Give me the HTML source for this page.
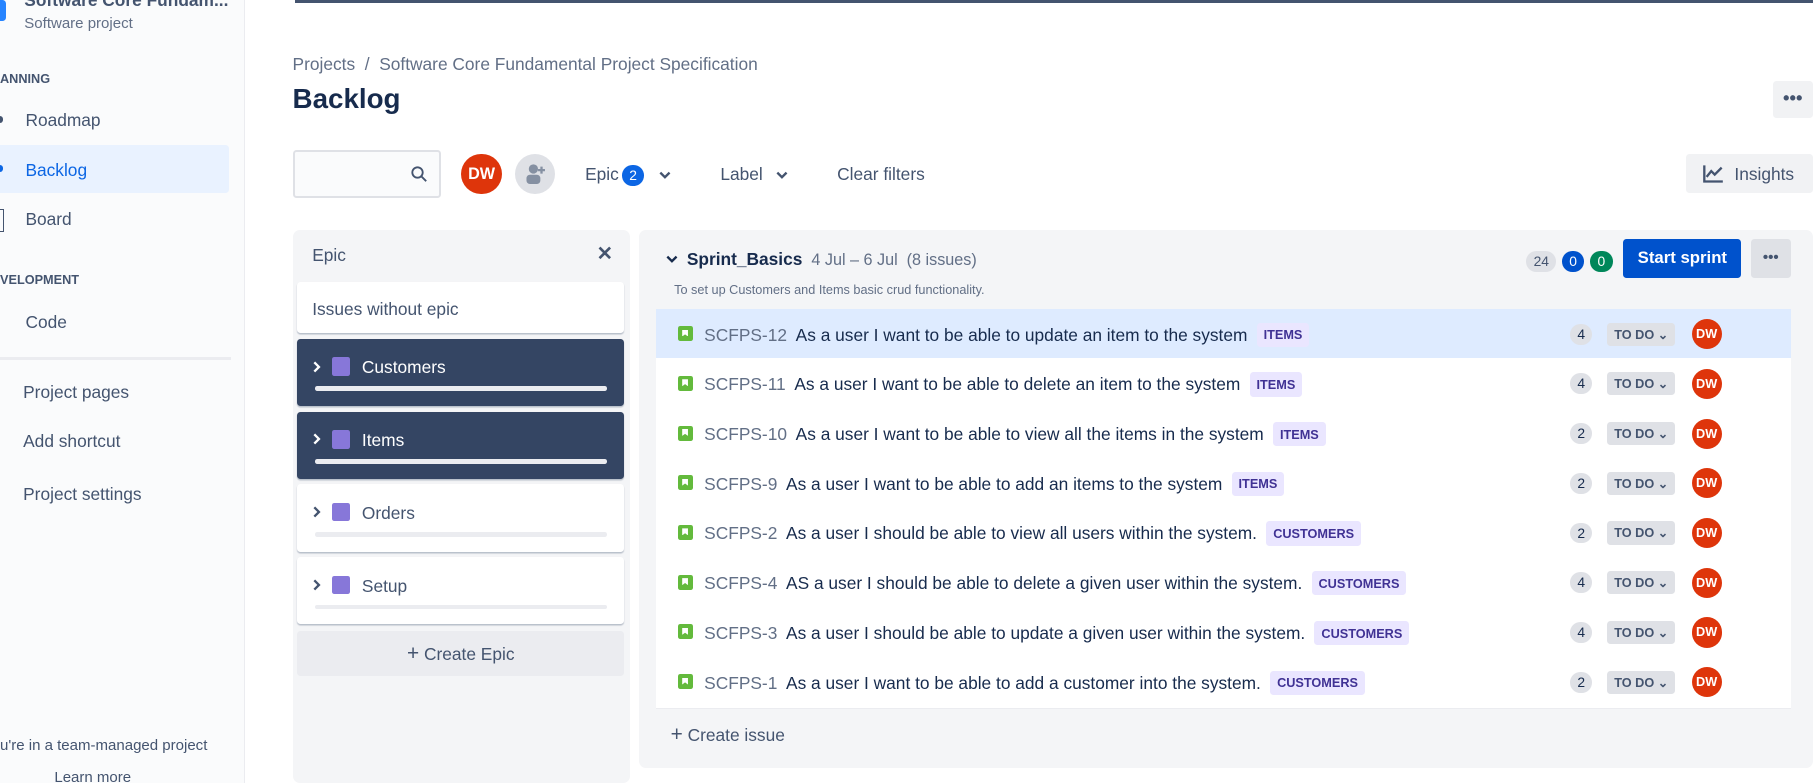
<!DOCTYPE html>
<html><head><meta charset="utf-8"><style>
html,body{margin:0;padding:0;width:1813px;height:783px;overflow:hidden;background:#fff;}
#w{zoom:1.15625;width:1568px;height:677px;position:relative;font-family:"Liberation Sans",sans-serif;color:#172b4d;}
.a{position:absolute;white-space:nowrap;}
.sb{left:0;top:0;width:211px;height:677px;background:#fafbfc;border-right:1px solid #ebecf0;}
.nav{font-size:15px;color:#44546f;}
.hd{font-size:11px;font-weight:bold;color:#44546f;}
.av{border-radius:50%;background:#de350b;color:#fff;font-weight:bold;text-align:center;}
.card{left:257px;width:283px;height:58px;border-radius:3px;background:#fff;box-shadow:0 1px 1px rgba(9,30,66,.25);}
.card.dk{background:#344563;color:#fff;}
.card .t{position:absolute;left:56px;top:16px;font-size:15px;}
.card .sq{position:absolute;left:30px;top:16px;width:16px;height:16px;background:#8777d9;border-radius:2px;}
.card .ch{position:absolute;left:13px;top:18px;}
.card .bar{position:absolute;left:15px;right:15px;top:41px;height:4px;border-radius:2px;background:#ebecf0;}
.row{left:567px;width:982px;height:43px;background:#fff;border-bottom:1px solid #ebecf0;font-size:15px;}
.row .ic{position:absolute;left:19px;top:15px;width:13px;height:13px;background:#63ba3c;border-radius:2px;}
.row .ic:after{content:"";position:absolute;left:4px;top:3px;width:5px;height:6px;background:#fff;clip-path:polygon(0 0,100% 0,100% 100%,50% 70%,0 100%);}
.row .k{position:absolute;left:42px;top:12px;color:#626f86;}
.lab{display:inline-block;background:#eae6ff;color:#403294;font-size:11px;font-weight:bold;padding:4px 6px;border-radius:3px;margin-left:8px;vertical-align:1px;}
.pt{position:absolute;left:791px;top:13px;width:19px;height:18px;background:#dfe1e6;border-radius:9px;font-size:12px;text-align:center;line-height:18px;}
.td{position:absolute;left:823px;top:12px;width:59px;height:20px;background:#dfe1e6;border-radius:3px;font-size:11px;font-weight:bold;color:#44546f;line-height:20px;text-align:center;}
.rav{position:absolute;left:896px;top:9px;width:26px;height:26px;font-size:11px;line-height:26px;}
</style></head><body><div id="w">
<div class="a sb"></div>
<div class="a" style="left:0;top:0;width:5px;height:18px;background:#2684ff;border-radius:0 3px 3px 0"></div>
<div class="a" style="left:21px;top:-9px;font-size:15px;font-weight:bold;color:#44546f">Software Core Fundam...</div>
<div class="a" style="left:21px;top:13px;font-size:13px;color:#626f86">Software project</div>
<div class="a hd" style="left:0;top:61px">ANNING</div>
<div class="a" style="left:0;top:100px;width:3px;height:6px;background:#44546f;border-radius:0 3px 3px 0"></div>
<div class="a nav" style="left:22px;top:95px">Roadmap</div>
<div class="a" style="left:0;top:125px;width:198px;height:42px;background:#e9f2ff;border-radius:0 3px 3px 0"></div>
<div class="a" style="left:0;top:143px;width:3px;height:6px;background:#0c66e4;border-radius:0 3px 3px 0"></div>
<div class="a nav" style="left:22px;top:138px;color:#0c66e4">Backlog</div>
<div class="a nav" style="left:22px;top:181px">Board</div>
<div class="a" style="left:0;top:181px;width:3px;height:18px;border:1.5px solid #44546f;border-left:none;"></div>
<div class="a hd" style="left:0;top:235px">VELOPMENT</div>
<div class="a nav" style="left:22px;top:270px">Code</div>
<div class="a" style="left:0;top:309px;width:200px;height:2px;background:#ebecf0"></div>
<div class="a nav" style="left:20px;top:330px">Project pages</div>
<div class="a nav" style="left:20px;top:373px">Add shortcut</div>
<div class="a nav" style="left:20px;top:419px">Project settings</div>
<div class="a" style="left:0;top:637px;font-size:13px;color:#44546f">u're in a team-managed project</div>
<div class="a" style="left:47px;top:665px;font-size:13px;color:#44546f">Learn more</div>

<div class="a" style="left:255px;top:0;width:1313px;height:3px;background:#44546f"></div>
<div class="a" style="left:253px;top:47px;font-size:15px;color:#626f86">Projects &nbsp;/&nbsp; Software Core Fundamental Project Specification</div>
<div class="a" style="left:253px;top:72px;font-size:24px;font-weight:bold;color:#172b4d">Backlog</div>
<div class="a" style="left:1533px;top:70px;width:35px;height:32px;background:#f1f2f4;border-radius:3px;text-align:center;font-size:16px;font-weight:bold;line-height:30px;color:#44546f">•••</div>

<div class="a" style="left:253px;top:130px;width:125px;height:38px;border:2px solid #dfe1e6;border-radius:3px;background:#fafbfc"></div>
<svg class="a" style="left:355px;top:143px" width="16" height="16" viewBox="0 0 16 16"><circle cx="6.5" cy="6.5" r="4.5" fill="none" stroke="#44546f" stroke-width="1.6"/><path d="M10 10l4 4" stroke="#44546f" stroke-width="1.6"/></svg>
<div class="a av" style="left:399px;top:133px;width:35px;height:35px;line-height:35px;font-size:14px">DW</div>
<div class="a" style="left:445px;top:133px;width:35px;height:35px;border-radius:50%;background:#dfe1e6"></div>
<svg class="a" style="left:452px;top:140px" width="22" height="22" viewBox="0 0 22 22"><circle cx="9" cy="6" r="4" fill="#8590a2"/><rect x="3" y="11" width="12" height="8" rx="3" fill="#8590a2"/><path d="M16 4v6M13 7h6" stroke="#8590a2" stroke-width="2"/></svg>
<div class="a" style="left:506px;top:142px;font-size:15px;color:#44546f">Epic</div>
<div class="a" style="left:538px;top:143px;width:19px;height:18px;border-radius:9px;background:#0c66e4;color:#fff;font-size:12px;text-align:center;line-height:18px">2</div>
<svg class="a" style="left:569px;top:145px" width="12" height="12" viewBox="0 0 12 12"><path d="M2 4l4 4 4-4" fill="none" stroke="#44546f" stroke-width="2"/></svg>
<div class="a" style="left:623px;top:142px;font-size:15px;color:#44546f">Label</div>
<svg class="a" style="left:670px;top:145px" width="12" height="12" viewBox="0 0 12 12"><path d="M2 4l4 4 4-4" fill="none" stroke="#44546f" stroke-width="2"/></svg>
<div class="a" style="left:724px;top:142px;font-size:15px;color:#44546f">Clear filters</div>
<div class="a" style="left:1458px;top:133px;width:110px;height:34px;background:#f1f2f4;border-radius:3px"></div>
<svg class="a" style="left:1472px;top:141px" width="20" height="18" viewBox="0 0 20 18"><path d="M2 2v14h16" fill="none" stroke="#44546f" stroke-width="2"/><path d="M4 12l4-5 3 3 6-6" fill="none" stroke="#44546f" stroke-width="2"/></svg>
<div class="a" style="left:1500px;top:142px;font-size:15px;color:#44546f">Insights</div>

<div class="a" style="left:253px;top:199px;width:292px;height:478px;background:#f4f5f7;border-radius:6px"></div>
<div class="a" style="left:270px;top:212px;font-size:15px;color:#44546f">Epic</div>
<div class="a" style="left:516px;top:209px;font-size:17px;font-weight:bold;color:#44546f">✕</div>
<div class="a card" style="top:244px;height:44px"><div class="t" style="left:13px;top:15px;color:#44546f">Issues without epic</div></div>
<div class="a card dk" style="top:293px"><svg class="ch" width="8" height="12" viewBox="0 0 8 12"><path d="M2 2l4 4-4 4" fill="none" stroke="#fff" stroke-width="2"/></svg><span class="sq"></span><span class="t">Customers</span><span class="bar"></span></div>
<div class="a card dk" style="top:356px"><svg class="ch" width="8" height="12" viewBox="0 0 8 12"><path d="M2 2l4 4-4 4" fill="none" stroke="#fff" stroke-width="2"/></svg><span class="sq"></span><span class="t">Items</span><span class="bar"></span></div>
<div class="a card" style="top:419px;color:#44546f"><svg class="ch" width="8" height="12" viewBox="0 0 8 12"><path d="M2 2l4 4-4 4" fill="none" stroke="#44546f" stroke-width="2"/></svg><span class="sq"></span><span class="t">Orders</span><span class="bar"></span></div>
<div class="a card" style="top:482px;color:#44546f"><svg class="ch" width="8" height="12" viewBox="0 0 8 12"><path d="M2 2l4 4-4 4" fill="none" stroke="#44546f" stroke-width="2"/></svg><span class="sq"></span><span class="t">Setup</span><span class="bar"></span></div>
<div class="a" style="left:257px;top:546px;width:283px;height:39px;background:#ebecf0;border-radius:3px;text-align:center;line-height:39px;font-size:15px;color:#44546f"><b style="font-size:18px;font-weight:normal">+</b> Create Epic</div>

<div class="a" style="left:553px;top:199px;width:1015px;height:465px;background:#f4f5f7;border-radius:6px"></div>
<svg class="a" style="left:575px;top:218px" width="12" height="12" viewBox="0 0 12 12"><path d="M2 4l4 4 4-4" fill="none" stroke="#172b4d" stroke-width="2"/></svg>
<div class="a" style="left:594px;top:215px;font-size:15px;color:#172b4d"><span style="font-weight:600">Sprint_Basics</span><span style="color:#626f86;font-size:14px">&nbsp; 4 Jul – 6 Jul &nbsp;(8 issues)</span></div>
<div class="a" style="left:583px;top:244px;font-size:11px;color:#626f86">To set up Customers and Items basic crud functionality.</div>
<div class="a" style="left:1320px;top:217px;width:26px;height:18px;border-radius:9px;background:#dfe1e6;font-size:12px;text-align:center;line-height:18px;color:#44546f">24</div>
<div class="a" style="left:1351px;top:217px;width:19px;height:18px;border-radius:9px;background:#0052cc;font-size:12px;text-align:center;line-height:18px;color:#fff">0</div>
<div class="a" style="left:1375px;top:217px;width:20px;height:18px;border-radius:9px;background:#00875a;font-size:12px;text-align:center;line-height:18px;color:#fff">0</div>
<div class="a" style="left:1404px;top:207px;width:102px;height:33px;background:#0052cc;border-radius:3px;color:#fff;font-size:14.5px;font-weight:bold;text-align:center;line-height:33px">Start sprint</div>
<div class="a" style="left:1514px;top:207px;width:35px;height:33px;background:#dfe1e6;border-radius:3px;text-align:center;line-height:33px;font-size:13px;font-weight:bold;color:#44546f">•••</div>

<div class="a row" style="top:267px;background:#deebff"><span class="ic"></span><span class="k">SCFPS-12&nbsp; <span style="color:#172b4d">As a user I want to be able to update an item to the system</span><span class="lab">ITEMS</span></span><span class="pt">4</span><span class="td">TO DO ⌄</span><span class="a av rav">DW</span></div>
<div class="a row" style="top:310px"><span class="ic"></span><span class="k">SCFPS-11&nbsp; <span style="color:#172b4d">As a user I want to be able to delete an item to the system</span><span class="lab">ITEMS</span></span><span class="pt">4</span><span class="td">TO DO ⌄</span><span class="a av rav">DW</span></div>
<div class="a row" style="top:353px"><span class="ic"></span><span class="k">SCFPS-10&nbsp; <span style="color:#172b4d">As a user I want to be able to view all the items in the system</span><span class="lab">ITEMS</span></span><span class="pt">2</span><span class="td">TO DO ⌄</span><span class="a av rav">DW</span></div>
<div class="a row" style="top:396px"><span class="ic"></span><span class="k">SCFPS-9&nbsp; <span style="color:#172b4d">As a user I want to be able to add an items to the system</span><span class="lab">ITEMS</span></span><span class="pt">2</span><span class="td">TO DO ⌄</span><span class="a av rav">DW</span></div>
<div class="a row" style="top:439px"><span class="ic"></span><span class="k">SCFPS-2&nbsp; <span style="color:#172b4d">As a user I should be able to view all users within the system.</span><span class="lab">CUSTOMERS</span></span><span class="pt">2</span><span class="td">TO DO ⌄</span><span class="a av rav">DW</span></div>
<div class="a row" style="top:482px"><span class="ic"></span><span class="k">SCFPS-4&nbsp; <span style="color:#172b4d">AS a user I should be able to delete a given user within the system.</span><span class="lab">CUSTOMERS</span></span><span class="pt">4</span><span class="td">TO DO ⌄</span><span class="a av rav">DW</span></div>
<div class="a row" style="top:525px"><span class="ic"></span><span class="k">SCFPS-3&nbsp; <span style="color:#172b4d">As a user I should be able to update a given user within the system.</span><span class="lab">CUSTOMERS</span></span><span class="pt">4</span><span class="td">TO DO ⌄</span><span class="a av rav">DW</span></div>
<div class="a row" style="top:568px;height:44px"><span class="ic"></span><span class="k">SCFPS-1&nbsp; <span style="color:#172b4d">As a user I want to be able to add a customer into the system.</span><span class="lab">CUSTOMERS</span></span><span class="pt">2</span><span class="td">TO DO ⌄</span><span class="a av rav">DW</span></div>
<div class="a" style="left:580px;top:625px;font-size:15px;color:#44546f"><span style="font-size:18px">+</span> Create issue</div>
</div></body></html>
